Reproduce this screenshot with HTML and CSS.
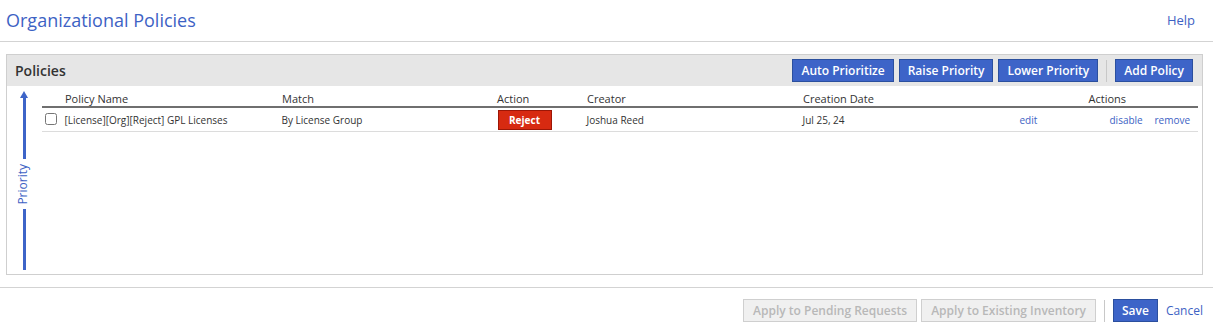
FILE: index.html
```html
<!DOCTYPE html>
<html lang="en">
<head>
    <meta charset="UTF-8">
    <title>Organizational Policies</title>
    <link rel="stylesheet" href="styles.css">
</head>
<body>
    <div class="page">
        <div class="top-bar">
            <h1>Organizational Policies</h1>
            <a href="#" class="help">Help</a>
        </div>

        <div class="panel">
            <div class="panel-header">
                <h2>Policies</h2>
                <div class="toolbar">
                    <button class="btn">Auto Prioritize</button>
                    <button class="btn">Raise Priority</button>
                    <button class="btn">Lower Priority</button>
                    <span class="divider"></span>
                    <button class="btn">Add Policy</button>
                </div>
            </div>
            <div class="panel-body">
                <div class="priority">
                    <span class="arrow-head"></span>
                    <span class="line"></span>
                    <span class="priority-label">Priority</span>
                    <span class="line"></span>
                </div>
                <table class="policies">
                    <colgroup>
                        <col style="width: 20px">
                        <col style="width: 217px">
                        <col style="width: 215px">
                        <col style="width: 90px">
                        <col style="width: 216px">
                        <col style="width: 217px">
                        <col style="width: 45px">
                        <col style="width: 45px">
                        <col style="width: 45px">
                        <col>
                    </colgroup>
                    <thead>
                        <tr>
                            <th></th>
                            <th>Policy Name</th>
                            <th>Match</th>
                            <th>Action</th>
                            <th>Creator</th>
                            <th>Creation Date</th>
                            <th colspan="4" class="center">Actions</th>
                        </tr>
                    </thead>
                    <tbody>
                        <tr>
                            <td class="check"><input type="checkbox"></td>
                            <td>[License][Org][Reject] GPL Licenses</td>
                            <td>By License Group</td>
                            <td><span class="reject">Reject</span></td>
                            <td>Joshua Reed</td>
                            <td>Jul 25, 24</td>
                            <td><a href="#">edit</a></td>
                            <td></td>
                            <td><a href="#">disable</a></td>
                            <td><a href="#">remove</a></td>
                        </tr>
                    </tbody>
                </table>
            </div>
        </div>

        <div class="footer">
            <button class="btn disabled">Apply to Pending Requests</button>
            <button class="btn disabled">Apply to Existing Inventory</button>
            <span class="divider"></span>
            <button class="btn">Save</button>
            <a href="#" class="cancel">Cancel</a>
        </div>
    </div>
</body>
</html>
```

FILE: styles.css
```css
* {
    box-sizing: border-box;
}

body {
    margin: 0;
    font-family: "Open Sans", Arial, sans-serif;
    color: #333;
    background: #fff;
}

a {
    color: #3d62c4;
    text-decoration: none;
}

.page {
    width: 1213px;
}

.top-bar {
    display: flex;
    justify-content: space-between;
    align-items: center;
    height: 42px;
    padding: 0 18px 2px 6px;
    border-bottom: 1px solid #d3d3d3;
}

.top-bar h1 {
    margin: 0;
    font-size: 18px;
    font-weight: 400;
    color: #3d62c4;
}

.help {
    font-size: 13px;
}

.panel {
    margin: 12px 10px 0 6px;
    border: 1px solid #cfcfcf;
}

.panel-header {
    display: flex;
    justify-content: space-between;
    align-items: center;
    height: 31px;
    padding: 0 9px 0 8px;
    background: #e6e6e6;
}

.panel-header h2 {
    margin: 0;
    font-size: 14px;
    font-weight: 600;
    color: #333;
}

.toolbar,
.footer {
    display: flex;
    align-items: center;
    gap: 5px;
}

.divider {
    width: 1px;
    height: 22px;
    margin: 0 3px;
    background: #c8c8c8;
}

.btn {
    height: 23px;
    padding: 0 8px;
    border: 1px solid #2b4f9e;
    background: #3d64c8;
    color: #fff;
    font-family: inherit;
    font-size: 12px;
    font-weight: 600;
}

.btn.disabled {
    padding: 0 9px;
    border-color: #cfcfcf;
    background: #f0f0f0;
    color: #b8b8b8;
}

.panel-body {
    display: flex;
    padding: 2px 4px 4px 0;
    height: 188px;
}

.priority {
    display: flex;
    flex-direction: column;
    align-items: center;
    width: 34px;
    padding-top: 3px;
}

.arrow-head {
    width: 0;
    height: 0;
    border-left: 4px solid transparent;
    border-right: 4px solid transparent;
    border-bottom: 7px solid #3d64c8;
}

.line {
    flex: 1;
    width: 3px;
    background: #3d64c8;
}

.priority-label {
    writing-mode: vertical-rl;
    transform: rotate(180deg);
    margin-right: 4px;
    padding: 5px 0;
    font-size: 12px;
    color: #3d62c4;
}

.policies {
    flex: 1;
    align-self: flex-start;
    margin-left: 1px;
    table-layout: fixed;
    border-collapse: collapse;
    font-size: 10px;
}

.policies th {
    height: 19px;
    padding: 2px 3px 0;
    text-align: left;
    font-size: 11px;
    font-weight: 400;
    color: #333;
    border-bottom: 2px solid #6f6f6f;
}

.policies th.center {
    text-align: center;
}

.policies td {
    height: 24px;
    padding: 1px 2px 0;
    border-bottom: 1px solid #dcdcdc;
    border-right: 1px solid #fff;
    color: #333;
}

.policies td.check {
    padding: 0 0 0 3px;
}

.check input {
    width: 12px;
    height: 12px;
    margin: 2px 0 0;
}

.reject {
    display: inline-block;
    width: 54px;
    height: 20px;
    line-height: 18px;
    margin-left: 1px;
    text-align: center;
    border: 1px solid #9c1606;
    background: #d72a11;
    color: #fff;
    font-weight: 700;
}

.footer {
    justify-content: flex-end;
    gap: 4px;
    margin-top: 12px;
    padding: 11px 10px 0 0;
    border-top: 1px solid #d3d3d3;
}

.footer .divider {
    margin: 0 4px;
}

.cancel {
    margin-left: 4px;
    font-size: 12px;
}
```
